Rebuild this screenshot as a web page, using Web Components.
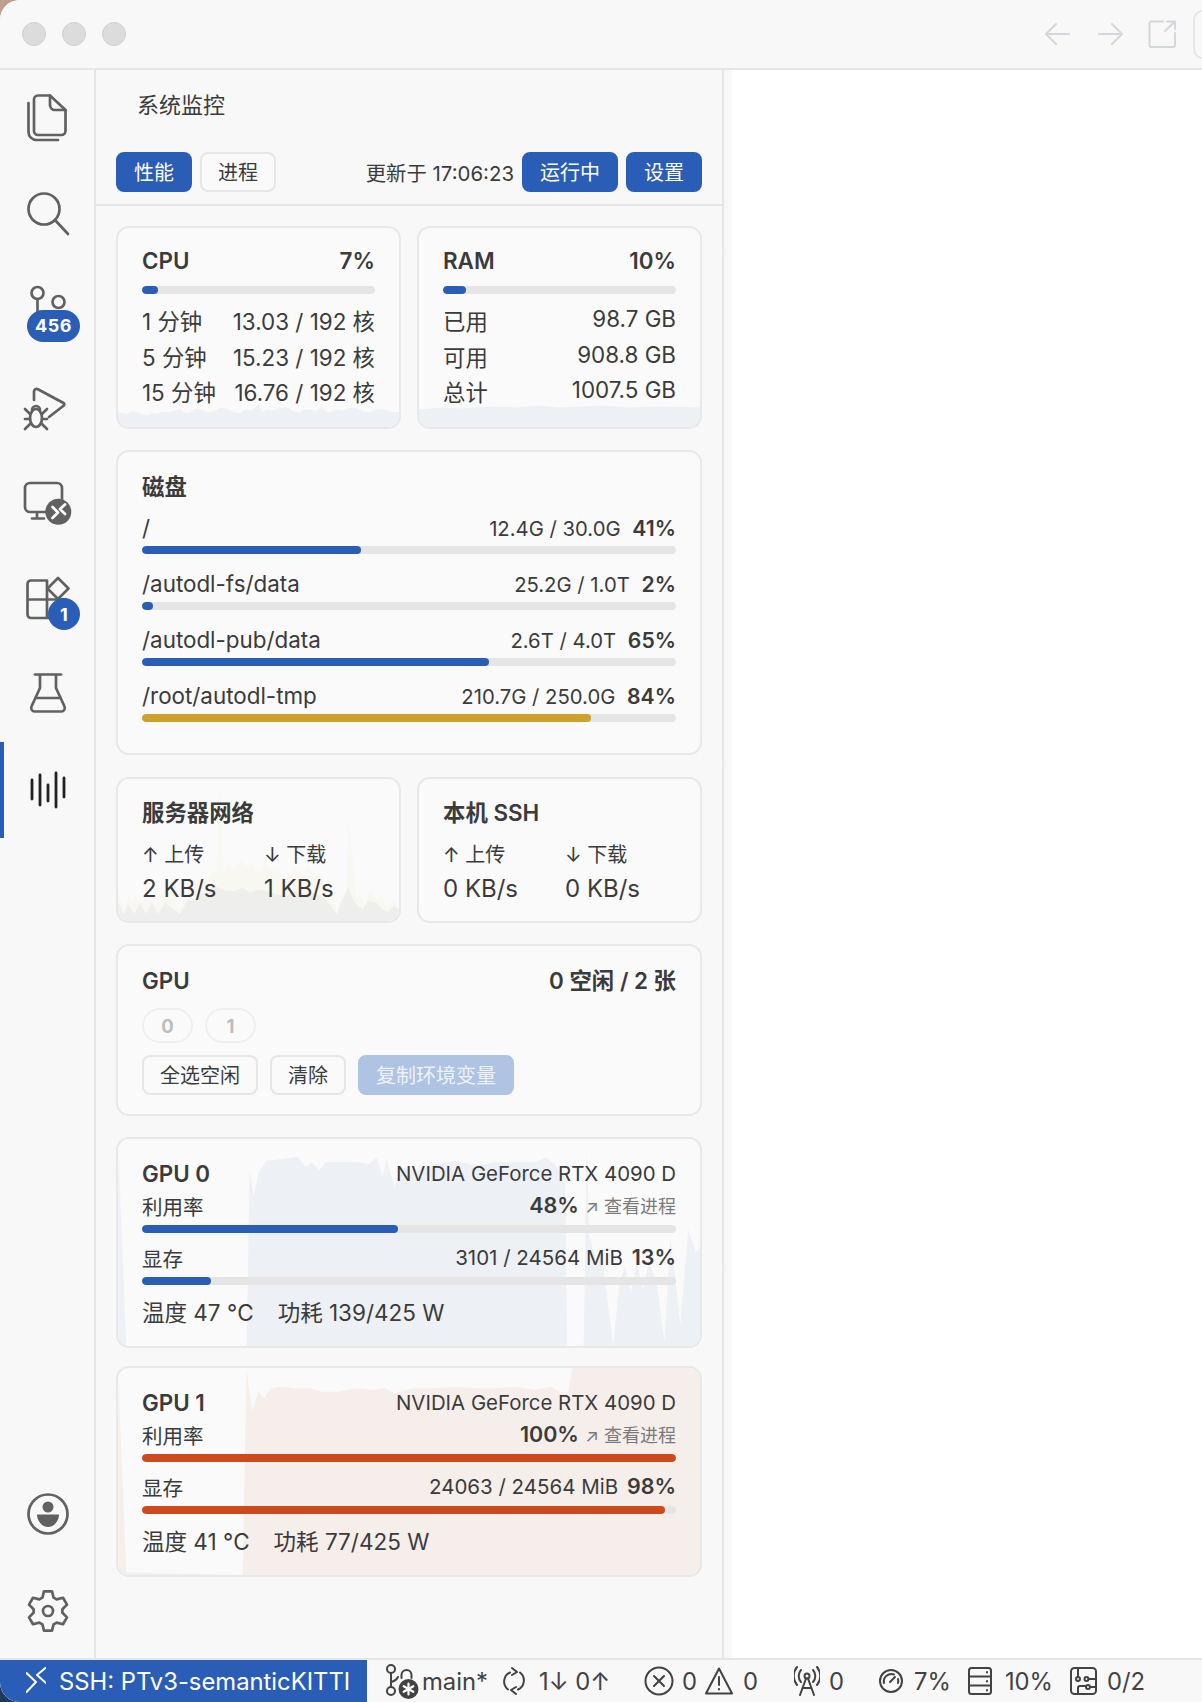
<!DOCTYPE html>
<html lang="zh">
<head>
<meta charset="utf-8">
<title>系统监控</title>
<style>
html, body { margin: 0; height: 100%; }
body {
    width: 1202px;
    height: 1702px;
    overflow: hidden;
    background: linear-gradient(#bf9f90 0, #bf9f90 40px, #1f3a5c 1660px);
    font-family: Inter, "Noto Sans CJK SC", sans-serif;
    color: #3b3b3b;
}
</style>
</head>
<body>
<app-window>
    <title-bar slot="title"></title-bar>
    <activity-bar slot="activity">
        <activity-item icon="files"></activity-item>
        <activity-item icon="search"></activity-item>
        <activity-item icon="git" badge="456" badge-type="pill"></activity-item>
        <activity-item icon="debug"></activity-item>
        <activity-item icon="remote"></activity-item>
        <activity-item icon="extensions" badge="1" badge-type="round"></activity-item>
        <activity-item icon="flask"></activity-item>
        <activity-item icon="wave" active></activity-item>
        <activity-item slot="bottom" icon="account"></activity-item>
        <activity-item slot="bottom" icon="gear"></activity-item>
    </activity-bar>
    <monitor-panel slot="panel">
        <div style="display:grid;grid-template-columns:1fr 1fr;gap:16px">
            <mon-card style="--pad:19px 24px 16.6px">
                <spark-line slot="spark" color="#edf0f4" box="352 680 846 606" points="352,1288 352,1240 380,1245 395,1238 410,1240 425,1246 440,1250 455,1242 470,1245 485,1238 500,1240 520,1236 540,1230 555,1242 570,1240 585,1230 600,1232 620,1240 640,1238 660,1226 680,1228 700,1240 720,1242 735,1232 750,1235 765,1228 775,1215 785,1240 800,1232 820,1235 840,1228 860,1225 880,1238 900,1240 915,1230 930,1232 950,1236 965,1222 978,1238 990,1240 1010,1232 1030,1235 1050,1226 1070,1228 1090,1238 1110,1240 1130,1232 1150,1230 1175,1238 1198,1240 1198,1288"></spark-line>
                <mon-head><span>CPU</span><span>7%</span></mon-head>
                <mon-bar value="7" style="margin:11px 0 10px"></mon-bar>
                <mon-row>1 分钟<span slot="end">13.03 / 192 核</span></mon-row>
                <mon-row>5 分钟<span slot="end">15.23 / 192 核</span></mon-row>
                <mon-row>15 分钟<span slot="end">16.76 / 192 核</span></mon-row>
            </mon-card>
            <mon-card style="--pad:19px 24px 16.6px">
                <spark-line slot="spark" color="#edf0f4" box="0 0 100 100" points="0,100 0,91 8,90 15,90.5 25,89.5 35,90 42,89 50,90 58,89.5 66,89 75,90 85,89.5 100,90 100,100"></spark-line>
                <mon-head><span>RAM</span><span>10%</span></mon-head>
                <mon-bar value="10" style="margin:11px 0 10px"></mon-bar>
                <mon-row>已用<span slot="end" style="line-height:30px">98.7 GB</span></mon-row>
                <mon-row>可用<span slot="end" style="line-height:30px">908.8 GB</span></mon-row>
                <mon-row>总计<span slot="end" style="line-height:30px">1007.5 GB</span></mon-row>
            </mon-card>
        </div>
        <mon-card style="--pad:21px 24px 15px;margin-top:20.6px">
            <mon-head style="margin-bottom:13px"><span>磁盘</span></mon-head>
            <disk-row path="/" used="12.4G / 30.0G" pct="41"></disk-row>
            <disk-row path="/autodl-fs/data" used="25.2G / 1.0T" pct="2"></disk-row>
            <disk-row path="/autodl-pub/data" used="2.6T / 4.0T" pct="65"></disk-row>
            <disk-row path="/root/autodl-tmp" used="210.7G / 250.0G" pct="84" color="#cca12c"></disk-row>
        </mon-card>
        <div style="display:grid;grid-template-columns:1fr 1fr;gap:16px;margin-top:21.7px">
            <mon-card style="--pad:20px 24px 13.5px">
                <spark-line slot="spark" color="#f9f7f2" box="44 52 714 436" points="45,490 45,400 55,440 60,460 70,410 80,430 90,400 100,450 110,410 120,430 130,400 140,450 155,400 170,420 185,390 200,460 220,400 240,380 255,350 270,360 285,330 295,340 303,80 310,340 325,310 340,330 355,300 370,320 385,310 400,340 415,310 430,330 450,320 470,350 490,325 510,340 525,320 540,340 555,335 570,370 585,380 600,460 612,410 625,440 628,170 640,300 650,420 660,400 670,440 685,390 700,420 715,410 730,450 745,420 758,460 758,490"></spark-line>
                <spark-line slot="spark" color="#eeeeec" box="44 52 714 436" points="45,490 45,430 58,465 70,435 85,465 100,430 115,465 130,430 145,465 165,430 180,445 200,465 220,425 240,420 255,400 270,405 285,380 300,385 320,395 340,395 360,385 380,400 400,390 420,395 445,405 470,410 495,395 520,405 545,400 570,420 585,440 600,465 615,420 628,380 645,430 665,450 680,425 700,430 715,450 730,460 745,440 758,450 758,490"></spark-line>
                <mon-head><span>服务器网络</span></mon-head>
                <net-rates up="2 KB/s" down="1 KB/s"></net-rates>
            </mon-card>
            <mon-card style="--pad:20px 24px 13.5px">
                <mon-head><span>本机 SSH</span></mon-head>
                <net-rates up="0 KB/s" down="0 KB/s"></net-rates>
            </mon-card>
        </div>
        <mon-card style="--pad:21px 24px 19px;margin-top:21px">
            <mon-head><span>GPU</span><span>0 空闲 / 2 张</span></mon-head>
            <div style="display:flex;gap:12px;margin:13px 0 12px">
                <gpu-chip>0</gpu-chip>
                <gpu-chip>1</gpu-chip>
            </div>
            <div style="display:flex;gap:12px">
                <mon-button>全选空闲</mon-button>
                <mon-button>清除</mon-button>
                <mon-button kind="disabled">复制环境变量</mon-button>
            </div>
        </mon-card>
        <gpu-card style="margin-top:21px" name="GPU 0" util="48" mem="3101 / 24564 MiB" mempct="13" temp="温度 47 °C" power="功耗 139/425 W" color="#2a5db5">
            <spark-line slot="spark" color="#edf0f5" box="44 54 1476 630" points="45,685 45,90 65,685 370,685 378,150 388,230 400,160 420,120 460,115 500,108 520,140 535,125 555,150 570,125 600,125 650,125 680,130 700,110 715,170 725,115 745,200 760,140 800,150 850,130 900,120 950,135 1000,125 1050,125 1100,125 1130,110 1150,130 1178,170 1183,685 1225,685 1232,90 1240,350 1255,420 1270,400 1300,680 1315,500 1330,440 1345,520 1360,430 1375,510 1390,430 1410,490 1430,670 1445,350 1470,620 1490,330 1510,400 1520,380 1520,685"></spark-line>
        </gpu-card>
        <gpu-card style="margin-top:18px" name="GPU 1" util="100" mem="24063 / 24564 MiB" mempct="98" temp="温度 41 °C" power="功耗 77/425 W" color="#cd4a1c">
            <spark-line slot="spark" color="#f6eeeb" box="44 738 1476 630" points="45,1368 45,770 65,1360 360,1368 370,745 385,870 400,810 415,830 430,800 460,795 490,800 530,800 560,810 600,810 650,800 690,805 720,800 745,815 790,800 850,800 900,795 950,800 1000,800 1050,795 1100,805 1140,795 1185,820 1196,738 1520,738 1520,1368"></spark-line>
        </gpu-card>
    </monitor-panel>
    <status-bar slot="status"></status-bar>
</app-window>

<script>
// gear outline, easier to compute than to write out by hand
function gearPath(cx, cy, outer, root, teeth) {
    let d = '';
    for (let i = 0; i < teeth; i++) {
        const a = -Math.PI / 2 + i * 2 * Math.PI / teeth;
        const pts = [[a - 0.40, root], [a - 0.20, outer], [a + 0.20, outer], [a + 0.40, root]];
        pts.forEach(([t, r], j) => {
            d += (i === 0 && j === 0 ? 'M' : 'L') + (cx + r * Math.cos(t)).toFixed(1) + ' ' + (cy + r * Math.sin(t)).toFixed(1);
        });
    }
    return d + 'Z';
}

const BAR_ICONS = {
    files: `<path d="M15 1.5H27L42.5 16V37a4 4 0 0 1-4 4H15a4 4 0 0 1-4-4V5.5a4 4 0 0 1 4-4Z"/><path d="M27 1.5V11a5 5 0 0 0 5 5H42.5"/><path d="M5.5 9V38a8 8 0 0 0 8 8H35"/>`,
    search: `<circle cx="21" cy="19" r="15.5"/><path d="M32 30L45 44"/>`,
    git: `<circle cx="14.5" cy="7" r="6"/><circle cx="35.5" cy="16" r="6"/><path d="M14.5 13V30"/>`,
    debug: `<path d="M11 18V9.5a2.6 2.6 0 0 1 3.9-2.2L40.5 21a1.6 1.6 0 0 1 0 2.8L26 35"/><path d="M7 36a6 9 0 0 1 12 0a6 9 0 0 1-12 0Z"/><path d="M9 28a4 4 0 0 1 8 0M2 27L7 32M2 37H7M2 47L7 42M24 27L19 32M24 37H19M24 47L19 42"/>`,
    remote: `<rect x="2" y="5" width="37" height="29" rx="5"/><path d="M14 35V40M9 40.5H21"/><circle cx="35.3" cy="33.7" r="13" fill="#616161" stroke="none"/><path d="M29.5 29L35 34.5L29.5 40M42 26.5L37 31L42 36" stroke="#fff"/>`,
    extensions: `<path d="M8 6.5H24V44H8a3.5 3.5 0 0 1-3.5-3.5V10a3.5 3.5 0 0 1 3.5-3.5ZM4.5 25.5H43V44H24"/><path d="M35 4L45.5 14.5L35 25L24.5 14.5Z"/>`,
    flask: `<path d="M12 4.5H38"/><path d="M17 5V18L8.5 36.5a3.5 3.5 0 0 0 3.2 5H38.3a3.5 3.5 0 0 0 3.2-5L33 18V5"/><path d="M13 28H37"/>`,
    wave: `<g stroke="#222" stroke-width="2.8"><path d="M9 14V33M17 9V39M25 19V35M33 7V41M41 12V31"/></g>`,
    account: `<circle cx="25" cy="24" r="19.5"/><circle cx="25" cy="17" r="5.5" fill="#616161" stroke="none"/><path d="M14 24.5H36C36 31 31 37 25 37C19 37 14 31 14 24.5Z" fill="#616161" stroke="none"/>`,
    gear: `<path d="${gearPath(25, 25, 20, 14.5, 6)}"/><circle cx="25" cy="25" r="5"/>`
};

class AppWindow extends HTMLElement {
    constructor() {
        super();
        this.attachShadow({ mode: 'open' });
        this.shadowRoot.innerHTML = `
        <style>
        :host {
            display: flex;
            flex-direction: column;
            width: 1202px;
            height: 1702px;
            border-radius: 20px 0 0 20px;
            overflow: hidden;
            background: #f8f8f8;
        }
        .main { display: flex; flex: 1 1 auto; min-height: 0; }
        .editor {
            flex: 1 1 auto;
            background: linear-gradient(to right, #f4f4f4, #ffffff 12px), #ffffff;
        }
        </style>
        <slot name="title"></slot>
        <div class="main">
            <slot name="activity"></slot>
            <slot name="panel"></slot>
            <div class="editor"></div>
        </div>
        <slot name="status"></slot>
        `;
    }
}

class TitleBar extends HTMLElement {
    constructor() {
        super();
        this.attachShadow({ mode: 'open' });
        this.shadowRoot.innerHTML = `
        <style>
        :host {
            display: flex;
            align-items: center;
            flex: 0 0 auto;
            box-sizing: border-box;
            height: 70px;
            padding-left: 22px;
            border-bottom: 2px solid #e6e6e6;
            background: #f8f8f8;
            overflow: hidden;
        }
        .dot {
            width: 22px;
            height: 22px;
            border: 1px solid #cfcfcf;
            border-radius: 50%;
            background: #dcdcdc;
            margin-right: 16px;
        }
        .tools { display: flex; align-items: center; margin-left: auto; margin-right: -31px; }
        svg { fill: none; stroke: #d3d6da; stroke-width: 2; stroke-linecap: round; stroke-linejoin: round; display: block; }
        .back { margin-right: 28px; }
        .next { margin-right: 25px; }
        .open { margin-right: 17px; }
        .cut { width: 36px; height: 45px; border: 2px solid #e6e6e6; border-radius: 10px; }
        </style>
        <div class="dot"></div><div class="dot"></div><div class="dot"></div>
        <div class="tools">
            <svg class="back" width="25" height="24" viewBox="0 0 25 24"><path d="M1 12H24M11 2L1 12L11 22"/></svg>
            <svg class="next" width="25" height="24" viewBox="0 0 25 24"><path d="M1 12H24M14 2L24 12L14 22"/></svg>
            <svg class="open" width="28" height="28" viewBox="0 0 28 28"><path d="M15 1.5H3.5a2 2 0 0 0-2 2V25a2 2 0 0 0 2 2H25a2 2 0 0 0 2-2V13M17 11L27 1.5M19 1.5H27V9"/></svg>
            <div class="cut"></div>
        </div>
        `;
    }
}

class ActivityBar extends HTMLElement {
    constructor() {
        super();
        this.attachShadow({ mode: 'open' });
        this.shadowRoot.innerHTML = `
        <style>
        :host {
            display: flex;
            flex-direction: column;
            justify-content: space-between;
            flex: 0 0 auto;
            width: 96px;
            box-sizing: border-box;
            border-right: 2px solid #e6e6e6;
            background: #f8f8f8;
        }
        .group { display: flex; flex-direction: column; }
        </style>
        <div class="group"><slot></slot></div>
        <div class="group"><slot name="bottom"></slot></div>
        `;
    }
}

class ActivityItem extends HTMLElement {
    constructor() {
        super();
        this.attachShadow({ mode: 'open' });
    }

    connectedCallback() {
        const badge = this.getAttribute('badge');
        const type = this.getAttribute('badge-type');
        this.shadowRoot.innerHTML = `
        <style>
        :host {
            display: flex;
            align-items: center;
            justify-content: center;
            position: relative;
            height: 96px;
        }
        :host([active])::before {
            content: "";
            position: absolute;
            left: 0;
            top: 0;
            bottom: 0;
            width: 4px;
            background: #2a5db5;
        }
        svg { fill: none; stroke: #616161; stroke-width: 2.7; stroke-linecap: round; stroke-linejoin: round; display: block; overflow: visible; }
        .badge {
            position: absolute;
            box-sizing: border-box;
            display: flex;
            align-items: center;
            justify-content: center;
            height: 32px;
            background: #2a5db5;
            color: #ffffff;
            font: 700 18px Inter, sans-serif;
        }
        .pill { left: 27px; top: 47.5px; width: 53px; border-radius: 16px; letter-spacing: 0.6px; }
        .round { left: 48px; top: 48px; width: 32px; border-radius: 50%; }
        </style>
        <svg width="48" height="48" viewBox="0 0 48 48">${BAR_ICONS[this.getAttribute('icon')]}</svg>
        ${badge ? `<span class="badge ${type}">${badge}</span>` : ''}
        `;
    }
}

class MonitorPanel extends HTMLElement {
    constructor() {
        super();
        this.attachShadow({ mode: 'open' });
        this.shadowRoot.innerHTML = `
        <style>
        :host {
            display: flex;
            flex-direction: column;
            flex: 0 0 auto;
            box-sizing: border-box;
            width: 628px;
            border-right: 2px solid #e6e6e6;
            background: #f8f8f8;
        }
        .title { height: 70px; line-height: 70px; padding-left: 41px; font-size: 22px; }
        .toolbar {
            display: flex;
            align-items: center;
            gap: 8px;
            padding: 12px 20px;
            border-bottom: 2px solid #e6e6e6;
        }
        .updated { margin-left: auto; font-size: 20.4px; }
        .body { padding: 20px 20px; }
        </style>
        <div class="title">系统监控</div>
        <div class="toolbar">
            <mon-button kind="primary">性能</mon-button>
            <mon-button>进程</mon-button>
            <span class="updated">更新于 17:06:23</span>
            <mon-button kind="primary">运行中</mon-button>
            <mon-button kind="primary">设置</mon-button>
        </div>
        <div class="body"><slot></slot></div>
        `;
    }
}

class MonButton extends HTMLElement {
    constructor() {
        super();
        this.attachShadow({ mode: 'open' });
        this.shadowRoot.innerHTML = `
        <style>
        :host {
            display: inline-flex;
            align-items: center;
            justify-content: center;
            box-sizing: border-box;
            height: 40px;
            padding: 0 16px 2px;
            border: 2px solid #e6e6e6;
            border-radius: 8px;
            background: #fafafa;
            font-size: 20px;
            color: #3b3b3b;
        }
        :host([kind="primary"]) { background: #2a5db5; border-color: #2a5db5; color: #ffffff; }
        :host([kind="disabled"]) { background: #afc3e3; border-color: #afc3e3; color: #eef2f9; }
        </style>
        <slot></slot>
        `;
    }
}

class MonCard extends HTMLElement {
    constructor() {
        super();
        this.attachShadow({ mode: 'open' });
        this.shadowRoot.innerHTML = `
        <style>
        :host {
            display: block;
            position: relative;
            box-sizing: border-box;
            border: 2px solid #e8e8e8;
            border-radius: 13px;
            background: #fafafa;
            overflow: hidden;
        }
        .content { position: relative; padding: var(--pad, 20px 24px); }
        </style>
        <slot name="spark"></slot>
        <div class="content"><slot></slot></div>
        `;
    }
}

// chart behind the card text, points are given in the units of "box"
class SparkLine extends HTMLElement {
    constructor() {
        super();
        this.attachShadow({ mode: 'open' });
    }

    connectedCallback() {
        this.shadowRoot.innerHTML = `
        <style>
        :host { position: absolute; inset: 0; display: block; }
        svg { display: block; width: 100%; height: 100%; }
        </style>
        <svg viewBox="${this.getAttribute('box')}" preserveAspectRatio="none">
            <polygon points="${this.getAttribute('points')}" fill="${this.getAttribute('color')}"/>
        </svg>
        `;
    }
}

class MonHead extends HTMLElement {
    constructor() {
        super();
        this.attachShadow({ mode: 'open' });
        this.shadowRoot.innerHTML = `
        <style>
        :host {
            display: flex;
            justify-content: space-between;
            line-height: 28px;
            font-size: 22.4px;
            font-weight: 600;
        }
        </style>
        <slot></slot>
        `;
    }
}

class MonBar extends HTMLElement {
    constructor() {
        super();
        this.attachShadow({ mode: 'open' });
    }

    connectedCallback() {
        const value = this.getAttribute('value');
        const color = this.getAttribute('color') || '#2a5db5';
        this.shadowRoot.innerHTML = `
        <style>
        :host { display: block; height: 8px; border-radius: 4px; background: #e5e5e5; overflow: hidden; }
        .fill { height: 100%; border-radius: 4px; }
        </style>
        <div class="fill" style="width:${value}%;background:${color}"></div>
        `;
    }
}

class MonRow extends HTMLElement {
    constructor() {
        super();
        this.attachShadow({ mode: 'open' });
        this.shadowRoot.innerHTML = `
        <style>
        :host {
            display: flex;
            justify-content: space-between;
            align-items: flex-start;
            height: 35.6px;
            line-height: 35.6px;
            font-size: 22.4px;
        }
        </style>
        <slot></slot><slot name="end"></slot>
        `;
    }
}

class DiskRow extends HTMLElement {
    constructor() {
        super();
        this.attachShadow({ mode: 'open' });
    }

    connectedCallback() {
        const pct = this.getAttribute('pct');
        this.shadowRoot.innerHTML = `
        <style>
        :host { display: block; margin-bottom: 16px; }
        .line { display: flex; justify-content: space-between; height: 28px; line-height: 28px; font-size: 22.4px; margin-bottom: 4px; }
        .size { font-size: 20.3px; }
        b { font-size: 21.2px; font-weight: 600; margin-left: 6px; }
        </style>
        <div class="line">
            <span>${this.getAttribute('path')}</span>
            <span class="size">${this.getAttribute('used')} <b>${pct}%</b></span>
        </div>
        <mon-bar value="${pct}" color="${this.getAttribute('color') || '#2a5db5'}"></mon-bar>
        `;
    }
}

class NetRates extends HTMLElement {
    constructor() {
        super();
        this.attachShadow({ mode: 'open' });
    }

    connectedCallback() {
        this.shadowRoot.innerHTML = `
        <style>
        :host { display: grid; grid-template-columns: 122px 1fr; margin-top: 14px; }
        .label { line-height: 28px; font-size: 20px; }
        .rate { line-height: 38px; margin-top: 1px; font-size: 24px; }
        </style>
        <div>
            <div class="label">↑ 上传</div>
            <div class="rate">${this.getAttribute('up')}</div>
        </div>
        <div>
            <div class="label">↓ 下载</div>
            <div class="rate">${this.getAttribute('down')}</div>
        </div>
        `;
    }
}

class GpuChip extends HTMLElement {
    constructor() {
        super();
        this.attachShadow({ mode: 'open' });
        this.shadowRoot.innerHTML = `
        <style>
        :host {
            display: inline-flex;
            align-items: center;
            justify-content: center;
            box-sizing: border-box;
            width: 51px;
            height: 35px;
            border: 2px solid #efefef;
            border-radius: 18px;
            font-size: 18.5px;
            font-weight: 700;
            color: #bdbdbd;
        }
        </style>
        <slot></slot>
        `;
    }
}

class GpuCard extends HTMLElement {
    constructor() {
        super();
        this.attachShadow({ mode: 'open' });
    }

    connectedCallback() {
        const a = (name) => this.getAttribute(name);
        this.shadowRoot.innerHTML = `
        <style>
        :host { display: block; }
        .line { display: flex; justify-content: space-between; align-items: flex-start; height: 28px; line-height: 30px; font-size: 20.5px; }
        .line .end { line-height: 24px; }
        .mem { line-height: 32px; }
        .mem .end { line-height: 26px; }
        .pct { font-size: 21.5px; font-weight: 600; }
        .mem .pct { margin-left: 3px; }
        .link { font-size: 18px; color: #7a7a7a; margin-left: 6px; }
        .stats { display: flex; gap: 24px; margin-top: 14px; line-height: 28px; font-size: 22.5px; }
        mon-bar { margin-top: 4px; margin-bottom: 11px; }
        </style>
        <mon-card style="--pad:21px 24px 19px">
            <slot name="spark" slot="spark"></slot>
            <mon-head style="margin-bottom:5px">
                <span>${a('name')}</span>
                <span style="font-weight:400;font-size:20.4px">NVIDIA GeForce RTX 4090 D</span>
            </mon-head>
            <div class="line"><span>利用率</span><span class="end"><span class="pct">${a('util')}%</span><span class="link">↗ 查看进程</span></span></div>
            <mon-bar value="${a('util')}" color="${a('color')}"></mon-bar>
            <div class="line mem"><span>显存</span><span class="end">${a('mem')} <b class="pct">${a('mempct')}%</b></span></div>
            <mon-bar value="${a('mempct')}" color="${a('color')}" style="margin-top:5px;margin-bottom:0"></mon-bar>
            <div class="stats"><span>${a('temp')}</span><span>${a('power')}</span></div>
        </mon-card>
        `;
    }
}

class StatusBar extends HTMLElement {
    constructor() {
        super();
        this.attachShadow({ mode: 'open' });
        this.shadowRoot.innerHTML = `
        <style>
        :host {
            display: flex;
            align-items: center;
            flex: 0 0 auto;
            box-sizing: content-box;
            height: 42px;
            border-top: 2px solid #e6e6e6;
            background: #f8f8f8;
            font-size: 23.8px;
            color: #424242;
            white-space: nowrap;
        }
        .remote {
            display: flex;
            align-items: center;
            box-sizing: border-box;
            width: 367px;
            height: 42px;
            padding-left: 26px;
            background: #2a5db5;
            color: #ffffff;
        }
        .remote svg { margin-right: 13px; stroke: #fff; }
        svg { display: block; flex: 0 0 auto; fill: none; stroke: #424242; stroke-width: 2; stroke-linecap: round; stroke-linejoin: round; }
        </style>
        <div class="remote">
            <svg width="20" height="28" viewBox="0 0 20 28"><path d="M0.5 6L10 15L0.5 25M20 0.5L11 8L20 16"/></svg>
            <span>SSH: PTv3-semanticKITTI</span>
        </div>
        <svg style="margin-left:19px" width="34" height="36" viewBox="0 0 34 36"><circle cx="5" cy="6" r="4"/><circle cx="5" cy="28" r="4"/><path d="M5 10V24M5 19C9 18 11 16 12 14"/><path d="M15.5 15V12a5 5 0 0 1 10 0V15"/><circle cx="22.5" cy="26" r="10" fill="#424242" stroke="none"/><path d="M22.5 20.5V31.5M17.7 23.2L27.3 28.8M27.3 23.2L17.7 28.8" stroke="#fff" stroke-width="2.2"/></svg>
        <span style="margin-left:2px">main*</span>
        <svg style="margin-left:14px" width="24" height="28" viewBox="0 0 24 28"><path d="M8 5.5a10 10 0 0 0-2 17M16 22.5a10 10 0 0 0 2-17"/><path d="M10 1L15 5L10 8M14 27L9 23L14 20"/></svg>
        <span style="margin-left:13px">1↓ 0↑</span>
        <svg style="margin-left:34px" width="30" height="30" viewBox="0 0 30 30"><circle cx="15" cy="15" r="13.5"/><path d="M10 10L20 20M20 10L10 20"/></svg>
        <span style="margin-left:8px">0</span>
        <svg style="margin-left:8px" width="28" height="28" viewBox="0 0 28 28"><path d="M14 1.5L27 26.5H1Z"/><path d="M14 10V18M14 22V22.5"/></svg>
        <span style="margin-left:10px">0</span>
        <svg style="margin-left:36px" width="26" height="30" viewBox="0 0 26 30"><circle cx="13" cy="10" r="2.5"/><path d="M12 12.5L6 29M14 12.5L20 29M9 22H17"/><path d="M7 4a9 9 0 0 0 0 12M19 4a9 9 0 0 1 0 12M3 1a14 14 0 0 0 0 18M23 1a14 14 0 0 1 0 18"/></svg>
        <span style="margin-left:9px">0</span>
        <svg style="margin-left:35px" width="24" height="24" viewBox="0 0 24 24"><circle cx="12" cy="12" r="11"/><path d="M5 14a7.5 7.5 0 0 1 10-8.5M19 10a7.5 7.5 0 0 1 0 4M11 13L16 8"/></svg>
        <span style="margin-left:11px">7%</span>
        <svg style="margin-left:17px" width="24" height="28" viewBox="0 0 24 28"><rect x="1" y="1" width="22" height="26" rx="2.5"/><path d="M1 9.5H23M1 18.5H23M19 5V5.5M19 14V14.5M19 23V23.5"/></svg>
        <span style="margin-left:13px">10%</span>
        <svg style="margin-left:17px" width="27" height="28" viewBox="0 0 27 28"><rect x="1" y="1" width="25" height="26" rx="3.5"/><circle cx="8" cy="12" r="2"/><circle cx="16.5" cy="12" r="2"/><circle cx="18" cy="20" r="2"/><path d="M18.5 12H26M20 20H26M8 27V21a2 2 0 0 1 2-2H16M8 1V10"/></svg>
        <span style="margin-left:10px">0/2</span>
        `;
    }
}

customElements.define('app-window', AppWindow);
customElements.define('title-bar', TitleBar);
customElements.define('activity-bar', ActivityBar);
customElements.define('activity-item', ActivityItem);
customElements.define('monitor-panel', MonitorPanel);
customElements.define('mon-button', MonButton);
customElements.define('mon-card', MonCard);
customElements.define('spark-line', SparkLine);
customElements.define('mon-head', MonHead);
customElements.define('mon-bar', MonBar);
customElements.define('mon-row', MonRow);
customElements.define('disk-row', DiskRow);
customElements.define('net-rates', NetRates);
customElements.define('gpu-chip', GpuChip);
customElements.define('gpu-card', GpuCard);
customElements.define('status-bar', StatusBar);
</script>
</body>
</html>
